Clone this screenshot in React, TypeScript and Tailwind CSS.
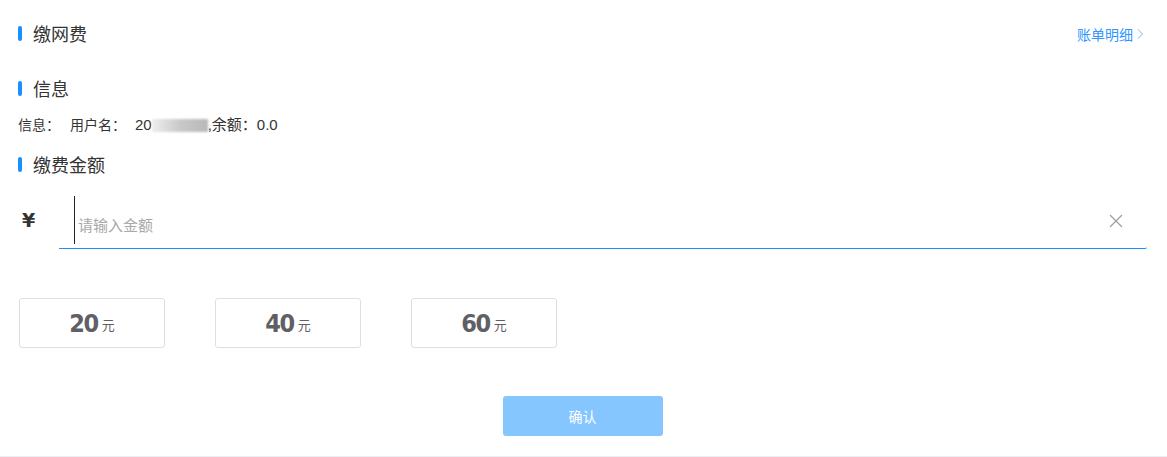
import React from "react";

function Heading({ children }: { children: React.ReactNode }) {
  return (
    <div className="flex items-center">
      <div className="w-[4px] h-[15px] rounded-full bg-[#1890ff]" />
      <span className="ml-[11px] text-[18px] leading-[22px] text-[#333]">{children}</span>
    </div>
  );
}

function Chip({ v }: { v: string }) {
  return (
    <div className="w-[146px] h-[50px] border border-[#dcdfe6] rounded-[3px] flex items-center justify-center text-[#5f6066]">
      <span
        className="text-[25px] font-bold leading-none"
        style={{ fontFamily: '"DejaVu Sans Condensed", "Liberation Sans Narrow", sans-serif', letterSpacing: "-1.5px" }}
      >
        {v}
      </span>
      <span className="ml-[4px] text-[13px] mt-[4px]">元</span>
    </div>
  );
}

export default function App() {
  return (
    <div
      className="w-[1167px] h-[457px] bg-white border-b border-[#eceef3] pl-[18px] pr-[20px] box-border"
      style={{ fontFamily: '"Noto Sans CJK SC", "Liberation Sans", sans-serif' }}
    >
      <div className="h-[66px] flex items-center justify-between">
        <Heading>缴网费</Heading>
        <div className="flex items-center text-[14px] text-[#3096ff] mr-[2px] mt-[2px]">
          <span>账单明细</span>
          <svg width="9" height="12" viewBox="0 0 9 12" className="ml-[3px]">
            <path d="M2 1.5 L6.5 6 L2 10.5" fill="none" stroke="#7ab4f5" strokeWidth="1" />
          </svg>
        </div>
      </div>
      <div className="mt-[11px]">
        <Heading>信息</Heading>
      </div>
      <div className="mt-[15px] h-[22px] flex items-center text-[14px] text-[#333]" style={{ fontFamily: '"Liberation Sans", "Noto Sans CJK SC", sans-serif' }}>
        <span>信息：</span>
        <span className="ml-[10px]">用户名：</span>
        <span className="ml-[9px] text-[15px]">20</span>
        <span className="inline-block w-[56px] h-[13px] bg-gradient-to-r from-[#eeeeee] via-[#c9c9c9] to-[#b8b8b8] blur-[1px]" />
        <span className="text-[15px]">,余额：0.0</span>
      </div>
      <div className="mt-[17px]">
        <Heading>缴费金额</Heading>
      </div>
      <div className="mt-[21px] flex">
        <div className="w-[41px] flex items-center pl-[4px] pb-[4px]">
          <span className="text-[19px] font-bold text-[#333]" style={{ fontFamily: '"DejaVu Sans", sans-serif' }}>¥</span>
        </div>
        <div className="flex-1 h-[53px] border-b border-[#1890ff] rounded-br-[2px] flex items-start pr-[24px]">
          <div className="ml-[15px] w-[1px] h-[48px] bg-[#222]" />
          <input
            className="flex-1 ml-[3px] mt-[18px] h-[22px] text-[15px] outline-none placeholder:text-[#a8a8a8] bg-transparent"
            placeholder="请输入金额"
          />
          <svg width="14" height="14" viewBox="0 0 14 14" className="mt-[18px]">
            <path d="M1 1 L13 13 M13 1 L1 13" stroke="#a0a0a0" strokeWidth="1.3" />
          </svg>
        </div>
      </div>
      <div className="mt-[49px] ml-[1px] flex gap-[50px]">
        <Chip v="20" />
        <Chip v="40" />
        <Chip v="60" />
      </div>
      <div className="mt-[48px] flex justify-center">
        <button className="w-[160px] h-[40px] rounded-[3px] bg-[#85c6ff] text-white text-[14px]">确认</button>
      </div>
    </div>
  );
}
